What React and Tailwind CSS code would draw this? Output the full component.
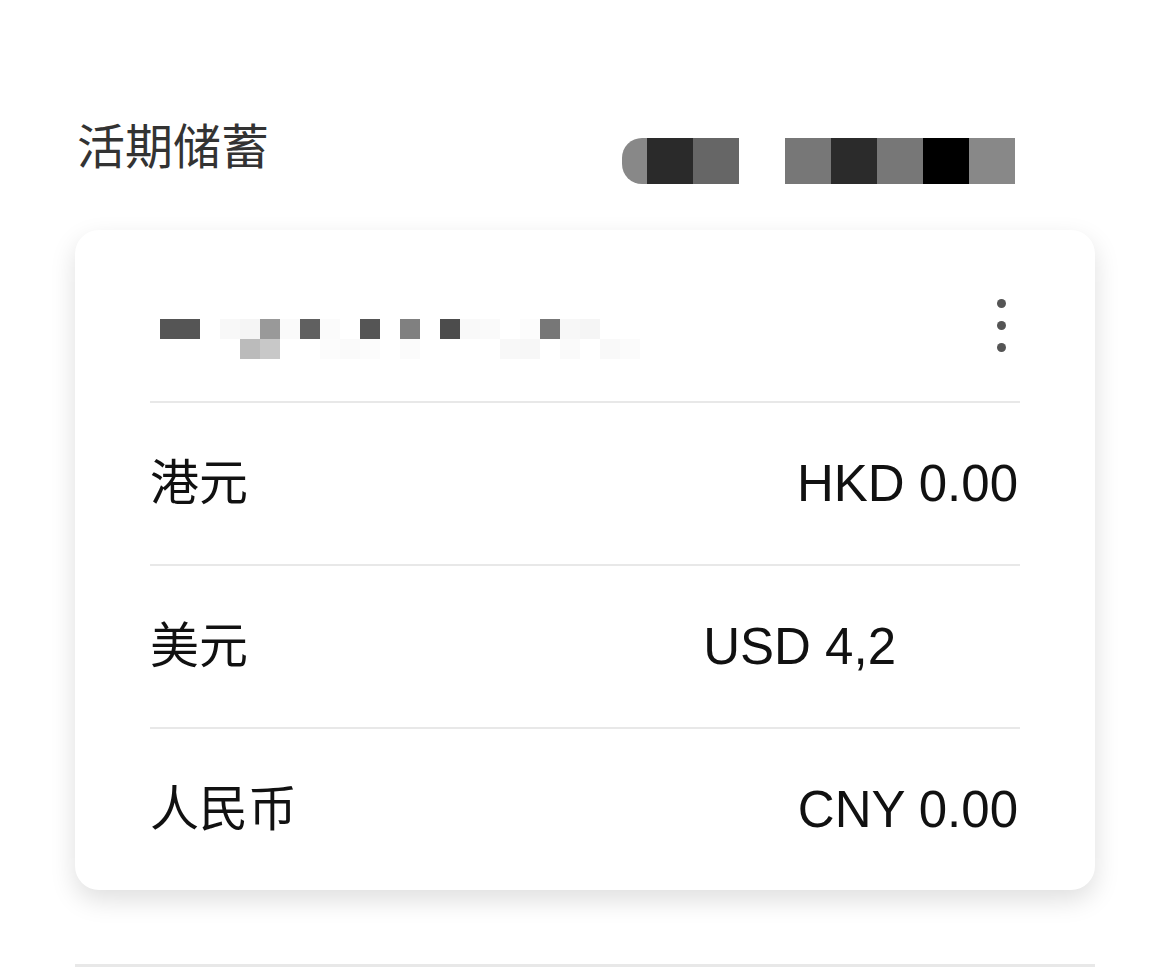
const font = { fontFamily: '"Liberation Sans", "Noto Sans CJK SC", sans-serif' };

const topMask = [
  ["#2a2a2a", "#666666"],
  ["#777777", "#2b2b2b", "#777777", "#000000", "#888888"],
];

const nameRow1 = [
  "#555555", "#555555", "#ffffff", "#f8f8f8", "#f5f5f5", "#999999", "#fafafa", "#606060",
  "#fbfbfb", "#ffffff", "#555555", "#ffffff", "#808080", "#ffffff", "#4c4c4c", "#f9f9f9",
  "#fafafa", "#ffffff", "#fcfcfc", "#777777", "#f7f7f7", "#f5f5f5", "#ffffff", "#ffffff",
];
const nameRow2 = [
  "#ffffff", "#ffffff", "#ffffff", "#ffffff", "#bbbbbb", "#c8c8c8", "#ffffff", "#ffffff",
  "#fcfcfc", "#fafafa", "#fcfcfc", "#ffffff", "#fbfbfb", "#ffffff", "#ffffff", "#ffffff",
  "#ffffff", "#f8f8f8", "#f7f7f7", "#ffffff", "#fafafa", "#ffffff", "#f9f9f9", "#fbfbfb",
];

const rows = [
  { name: "港元", amount: "HKD 0.00" },
  { name: "美元", amount: "USD 4,2", masked: true },
  { name: "人民币", amount: "CNY 0.00" },
];

export default function App() {
  return (
    <div className="min-h-screen bg-white" style={font}>
      <div className="px-[75px] pt-[118px]">
        <div className="flex items-center h-[60px]">
          <h1 className="pl-[2px] text-[48px] leading-none text-[#333333] font-normal">活期储蓄</h1>
          <div className="ml-[353px] mt-[26px] flex items-center">
            <div className="w-[25px] h-[46px] bg-[#888888] rounded-l-[20px]" />
            {topMask[0].map((c, i) => (
              <div key={i} className="w-[46px] h-[46px]" style={{ background: c }} />
            ))}
            <div className="w-[46px]" />
            {topMask[1].map((c, i) => (
              <div key={i} className="w-[46px] h-[46px]" style={{ background: c }} />
            ))}
          </div>
        </div>

        <div className="mt-[52px] bg-white rounded-[24px] shadow-[0_10px_26px_rgba(0,0,0,0.13)] px-[75px]">
          <div className="h-[173px] flex items-center justify-between border-b-2 border-[#e8e8e8]">
            <div className="flex flex-col pl-[10px] mt-[46px]">
              <div className="flex">
                {nameRow1.map((c, i) => (
                  <div key={i} className="w-[20px] h-[20px]" style={{ background: c }} />
                ))}
              </div>
              <div className="flex">
                {nameRow2.map((c, i) => (
                  <div key={i} className="w-[20px] h-[20px]" style={{ background: c }} />
                ))}
              </div>
            </div>
            <div className="flex flex-col gap-[13px] pr-[14px] mt-[19px]">
              <span className="w-[9px] h-[9px] rounded-full bg-[#555555]" />
              <span className="w-[9px] h-[9px] rounded-full bg-[#555555]" />
              <span className="w-[9px] h-[9px] rounded-full bg-[#555555]" />
            </div>
          </div>

          {rows.map((r, i) => (
            <div
              key={r.name}
              className={`flex items-center justify-between ${i < rows.length - 1 ? "h-[163px] border-b-2 border-[#e8e8e8]" : "h-[161px]"}`}
            >
              <span className="text-[49px] leading-none text-[#111111]">{r.name}</span>
              <span className="flex items-center text-[51px] leading-none text-[#111111] pr-[2px]">
                {r.amount}
                {r.masked && <span className="inline-block w-[122px] h-[60px] bg-white" />}
              </span>
            </div>
          ))}
        </div>

        <div className="mt-[74px] h-[3px] bg-[#e8e8e8]" />
      </div>
    </div>
  );
}
